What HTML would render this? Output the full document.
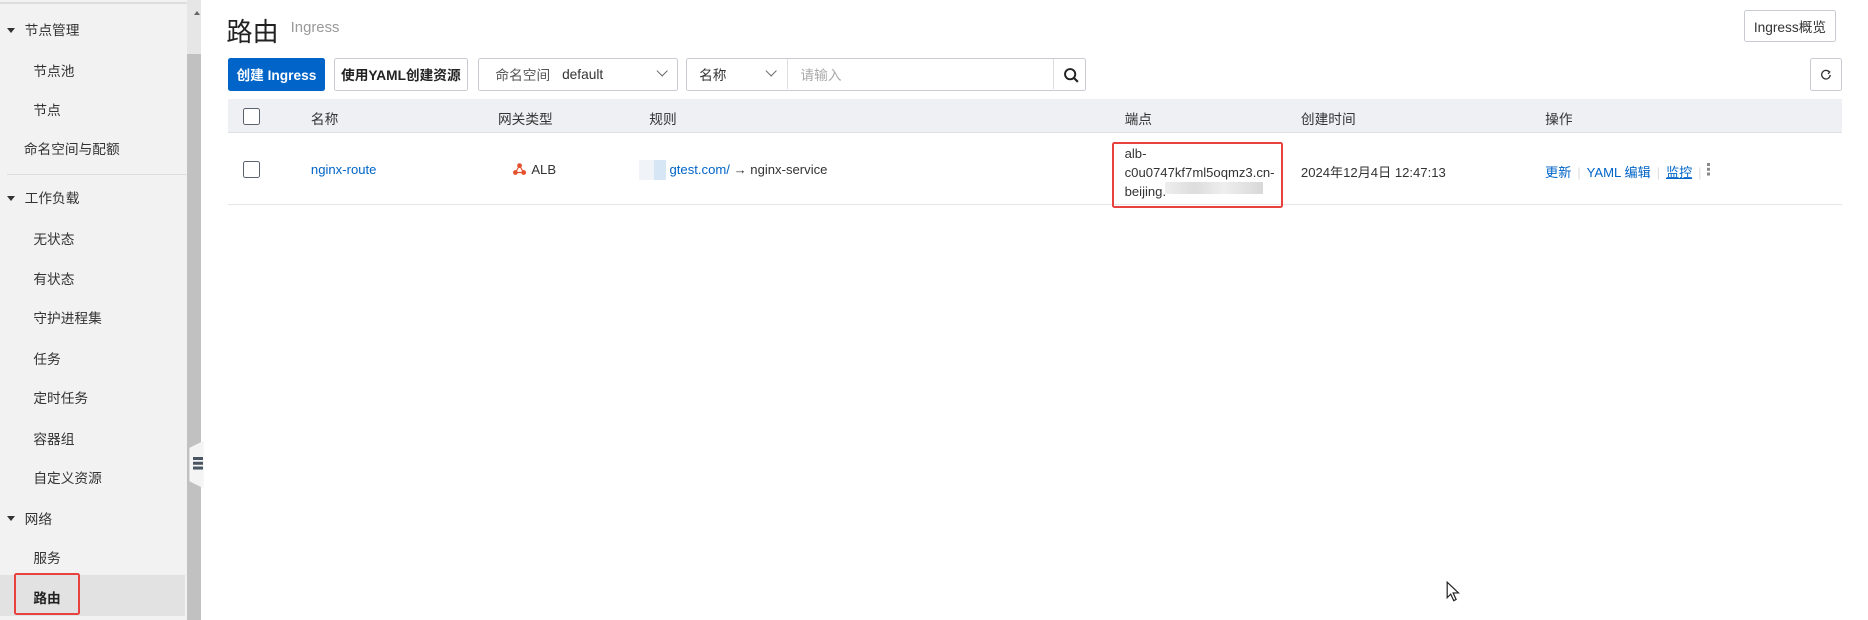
<!DOCTYPE html>
<html><head><meta charset="utf-8"><style>
*{box-sizing:border-box;margin:0;padding:0}
html,body{width:1868px;height:620px;overflow:hidden;background:#fff}
#w{zoom:1.19133;width:1568px;height:521px;position:relative;font-family:"Liberation Sans","Noto Sans CJK SC",sans-serif;font-size:11.5px;color:#333}
.a{position:absolute;white-space:nowrap}
.r{font-size:11px}
.side{position:absolute;left:0;top:0;width:157px;height:521px;background:#f2f2f2}
.tri{display:inline-block;width:0;height:0;border-left:4px solid transparent;border-right:4px solid transparent;border-top:5px solid #333;margin-right:8px;vertical-align:2px}
.btn{position:absolute;border:1px solid #c8ccd2;background:#fff;border-radius:2px;display:flex;align-items:center;justify-content:center;font-size:11.5px;color:#333}
.lnk{color:#0064c8}
.chev{position:absolute;width:7px;height:7px;border-right:1.3px solid #666;border-bottom:1.3px solid #666;transform:rotate(45deg)}
.cb{position:absolute;width:14px;height:14px;border:1px solid #5a6270;border-radius:2px;background:#fff}
</style></head><body><div id="w">
<div class="side">
 <div style="position:absolute;left:0;top:2px;width:157px;height:1px;background:#ddd"></div>
 <div class="a" style="left:6px;top:16px"><span class="tri"></span>节点管理</div>
 <div class="a" style="left:28px;top:50px">节点池</div>
 <div class="a" style="left:28px;top:83px">节点</div>
 <div class="a" style="left:20px;top:116px">命名空间与配额</div>
 <div style="position:absolute;left:6px;top:146px;width:150px;height:1px;background:#ddd"></div>
 <div class="a" style="left:6px;top:157px"><span class="tri"></span>工作负载</div>
 <div class="a" style="left:28px;top:191px">无状态</div>
 <div class="a" style="left:28px;top:225px">有状态</div>
 <div class="a" style="left:28px;top:258px">守护进程集</div>
 <div class="a" style="left:28px;top:292px">任务</div>
 <div class="a" style="left:28px;top:325px">定时任务</div>
 <div class="a" style="left:28px;top:359px">容器组</div>
 <div class="a" style="left:28px;top:392px">自定义资源</div>
 <div class="a" style="left:6px;top:426px"><span class="tri"></span>网络</div>
 <div class="a" style="left:28px;top:459px">服务</div>
 <div style="position:absolute;left:0;top:483px;width:155px;height:34px;background:#e2e2e2"></div>
 <div class="a" style="left:28px;top:493px;font-weight:bold;color:#222">路由</div>
 <div style="position:absolute;left:12px;top:481px;width:55px;height:35px;border:2px solid #e8413e;border-radius:2px"></div>
</div>
<div style="position:absolute;left:157px;top:0;width:12px;height:521px;background:#e6e6e6"></div>
<div style="position:absolute;left:157px;top:45px;width:12px;height:476px;background:#c1c1c1"></div>
<div style="position:absolute;left:163px;top:9px;width:0;height:0;border-left:3px solid transparent;border-right:3px solid transparent;border-bottom:4px solid #666"></div>
<div style="position:absolute;left:159px;top:370px;width:12px;height:40px;background:#f4f4f4;clip-path:polygon(0 15%,100% 0,100% 100%,0 85%)"></div>
<div style="position:absolute;left:162px;top:384px;width:8px;height:2px;background:#4a5563;box-shadow:0 4px 0 #4a5563,0 8px 0 #4a5563"></div>

<div class="a" style="left:190px;top:9px;font-size:22px;color:#222">路由</div>
<div class="a" style="left:244px;top:17px;font-size:12.5px;color:#999">Ingress</div>
<div class="btn" style="left:1464px;top:8px;width:77px;height:27px">Ingress概览</div>

<div class="btn" style="left:191px;top:49px;width:82px;height:27px;background:#0064c8;border-color:#0064c8;color:#fff;font-weight:bold">创建 Ingress</div>
<div class="btn" style="left:280px;top:49px;width:113px;height:27px;font-weight:bold;color:#222">使用YAML创建资源</div>
<div class="btn" style="left:401px;top:49px;width:168px;height:27px;justify-content:flex-start;padding-left:14px"><span style="color:#555">命名空间</span><span style="margin-left:10px">default</span></div>
<div class="chev" style="left:552px;top:56px"></div>
<div class="btn" style="left:576px;top:49px;width:336px;height:27px;justify-content:flex-start;padding-left:10px">名称<span style="position:absolute;left:84px;top:0;width:1px;height:25px;background:#ddd"></span><span style="position:absolute;left:95px;color:#aaa">请输入</span><span style="position:absolute;left:307px;top:0;width:1px;height:25px;background:#ddd"></span></div>
<div class="chev" style="left:644px;top:56px"></div>
<svg style="position:absolute;left:892px;top:56px" width="14" height="14" viewBox="0 0 14 14"><circle cx="6" cy="6" r="4.3" fill="none" stroke="#222" stroke-width="1.6"/><path d="M9.2 9.2L12.5 12.5" stroke="#222" stroke-width="1.8"/></svg>
<div class="btn" style="left:1519px;top:49px;width:27px;height:27px"><svg width="10" height="10" viewBox="0 0 10 10"><path d="M7.8 2.5A3.6 3.6 0 1 0 8.6 5" fill="none" stroke="#333" stroke-width="1.1"/><path d="M6 1.2L8.2 2.5 6.8 4.2" fill="none" stroke="#333" stroke-width="1"/></svg></div>

<div style="position:absolute;left:191px;top:83px;width:1355px;height:29px;background:#eef0f4;border-bottom:1px solid #dcdfe4"></div>
<div class="cb" style="left:204px;top:91px"></div>
<div class="a" style="left:261px;top:91px">名称</div>
<div class="a" style="left:418px;top:91px">网关类型</div>
<div class="a" style="left:545px;top:91px">规则</div>
<div class="a" style="left:944px;top:91px">端点</div>
<div class="a" style="left:1092px;top:91px">创建时间</div>
<div class="a" style="left:1297px;top:91px">操作</div>

<div style="position:absolute;left:191px;top:171px;width:1355px;height:1px;background:#e3e5e8"></div>
<div class="cb" style="left:204px;top:135px"></div>
<div class="a lnk r" style="left:261px;top:136px">nginx-route</div>
<svg style="position:absolute;left:431px;top:137px" width="11" height="10" viewBox="0 0 11 10"><circle cx="5.5" cy="2.2" r="2" fill="#e5502e"/><circle cx="2" cy="8" r="2" fill="#e5502e"/><circle cx="9" cy="8" r="2" fill="#e5502e"/><path d="M5.5 2.2L2 8M5.5 2.2L9 8M2 8H9" stroke="#e5502e" stroke-width="1"/></svg>
<div class="a r" style="left:446px;top:136px">ALB</div>
<div style="position:absolute;left:536px;top:134px;width:13px;height:17px;background:#f0f4f8"></div>
<div style="position:absolute;left:549px;top:134px;width:10px;height:17px;background:#d6e6f5"></div>
<div class="a r" style="left:562px;top:136px"><span class="lnk">gtest.com/</span> → nginx-service</div>
<div class="a r" style="left:944px;top:121px;line-height:16px">alb-<br>c0u0747kf7ml5oqmz3.cn-<br>beijing.</div>
<div style="position:absolute;left:978px;top:153px;width:82px;height:10px;background:linear-gradient(90deg,#eee,#ddd 30%,#eee 60%,#d8d8d8)"></div>
<div style="position:absolute;left:933px;top:119px;width:144px;height:56px;border:2px solid #e8413e;border-radius:2px"></div>
<div class="a r" style="left:1092px;top:136px">2024年12月4日 12:47:13</div>
<div class="a lnk r" style="left:1297px;top:136px">更新<span style="color:#ddd;margin:0 5px">|</span>YAML 编辑<span style="color:#ddd;margin:0 5px">|</span><span style="text-decoration:underline">监控</span><span style="color:#ddd;margin:0 5px">|</span></div>
<div style="position:absolute;left:1433px;top:137px;width:2px;height:2px;background:#888;box-shadow:0 4px 0 #888,0 8px 0 #888"></div>
<svg style="position:absolute;left:1214px;top:488px" width="14" height="18" viewBox="0 0 14 18"><path d="M1 1V14L4 11L6.5 16.5L8.5 15.5L6 10H10.5Z" fill="#fff" stroke="#222" stroke-width="1"/></svg>
</div></body></html>
